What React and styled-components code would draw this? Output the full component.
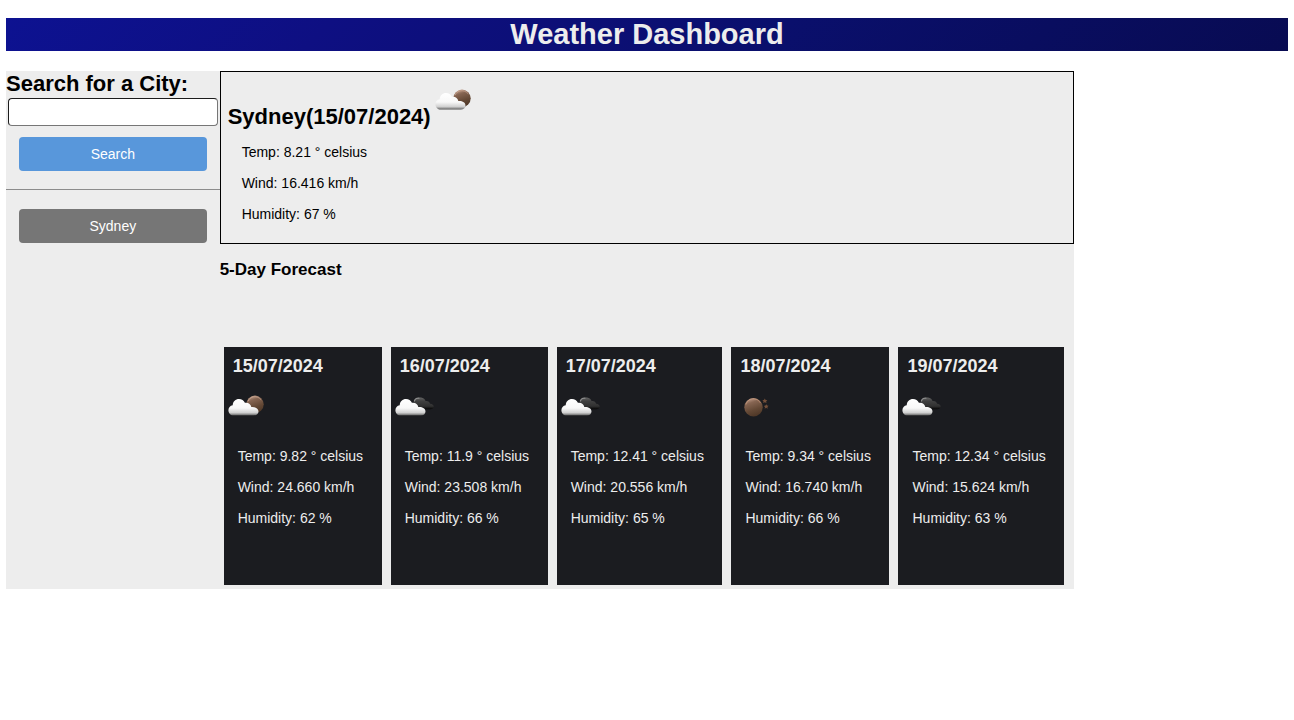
import React, { useId, useState } from "react";
import styled, { createGlobalStyle } from "styled-components";

const GlobalStyle = createGlobalStyle`
  * { box-sizing: border-box; }
  body {
    margin: 18px 6px 0;
    background: #fff;
    color: #000;
    font-family: "Liberation Sans", Arial, sans-serif;
    font-size: 14px;
    line-height: 16px;
  }
`;

const Header = styled.header`
  background: linear-gradient(135deg, #0d1291 0%, #0e0f82 25%, #0a0f6c 60%, #080b52 100%);
  color: #ededed;
  text-align: center;
`;

const PageTitle = styled.h1`
  margin: 0;
  font-size: 29px;
  line-height: 33px;
`;

const Layout = styled.div`
  display: grid;
  grid-template-columns: 1fr 4fr 1fr;
  margin-top: 20px;
`;

const Sidebar = styled.aside`
  min-width: 0;
  background: #ededed;
`;

const SearchForm = styled.form`
  display: flex;
  flex-direction: column;
`;

const SearchLabel = styled.label`
  font-size: 22px;
  font-weight: bold;
  line-height: 25px;
  white-space: nowrap;
`;

const SearchInput = styled.input`
  height: 28px;
  margin: 2px 2px 2px 2px;
  padding: 4px;
  border: 1px solid #767676;
  border-top-color: #1c1c1c;
  border-left-color: #1c1c1c;
  border-radius: 4px;
  background: #fff;
  font: inherit;
`;

const Button = styled.button`
  display: block;
  width: calc(100% - 26px);
  height: 34px;
  margin: 9px 13px 18px;
  padding: 0;
  border: 0;
  border-radius: 4px;
  background: ${({ $history }) => ($history ? "#767676" : "#5897db")};
  color: #fff;
  font: inherit;
  cursor: pointer;
`;

const Divider = styled.hr`
  height: 1px;
  margin: 0 0 19px;
  border: 0;
  background: #8c8c8c;
`;

const Content = styled.main`
  min-width: 0;
  background: #ededed;
`;

const Today = styled.section`
  padding: 14px 7px 13px;
  border: 1px solid #000;
`;

const TodayHeading = styled.div`
  display: flex;
  height: 51px;
`;

const CityName = styled.h2`
  margin: 0;
  padding-top: 18px;
  font-size: 22px;
  line-height: 25px;
`;

const Reading = styled.p`
  margin: 0;
  padding: 7px 14px 8px;
  white-space: nowrap;
`;

const Forecast = styled.section``;

const ForecastTitle = styled.h3`
  margin: 0;
  padding: 16px 0 68px;
  font-size: 17px;
  line-height: 19px;
`;

const Days = styled.div`
  display: flex;
  gap: 9px;
  padding: 0 10px 4px 4px;
`;

const Day = styled.article`
  flex: 1 1 auto;
  min-height: 238px;
  padding-top: 9px;
  background: #1b1c20;
  color: #ededed;
`;

const DayTitle = styled.h4`
  margin: 0 9px 16px;
  font-size: 18px;
  line-height: 20px;
`;

const DayIcon = styled.div`
  height: 49px;
`;

const IconSvg = styled.svg`
  display: block;
  flex: none;
  width: 45px;
  height: 34px;
`;

function WeatherIcon({ kind }) {
  const id = useId();
  const white = `${id}-white`;
  const sun = `${id}-sun`;
  const dark = `${id}-dark`;
  const moonOnly = kind === "clear";
  return (
    <IconSvg viewBox="0 0 45 34" role="img" aria-label={kind}>
      <defs>
        <linearGradient id={white} x1="0" y1="0" x2="0" y2="1">
          <stop offset="0" stopColor="#fff" />
          <stop offset=".55" stopColor="#f8f8f8" />
          <stop offset=".83" stopColor="#d0d0d0" />
          <stop offset=".94" stopColor="#888" />
          <stop offset="1" stopColor="#4b4b4b" />
        </linearGradient>
        <linearGradient id={sun} x1=".3" y1="0" x2=".65" y2="1">
          <stop offset="0" stopColor="#c3a08c" />
          <stop offset=".25" stopColor="#866552" />
          <stop offset=".65" stopColor="#634835" />
          <stop offset="1" stopColor="#4d3626" />
        </linearGradient>
        <linearGradient id={dark} x1="0" y1="0" x2="0" y2="1">
          <stop offset="0" stopColor="#666" />
          <stop offset=".3" stopColor="#414141" />
          <stop offset=".75" stopColor="#303030" />
          <stop offset="1" stopColor="#050505" />
        </linearGradient>
      </defs>
      {moonOnly && (
        <g>
          <circle cx="22.5" cy="15.2" r="9.2" fill={`url(#${sun})`} />
          <path d="M15 12.5c1-4 4.5-6 8-5.6 3 .1 5.2 1.8 6.4 4" fill="none" stroke="#c7987c" strokeWidth="1" opacity=".7" />
          <path d="m33.8 6.5.8 1.5 1.8.2-1.3 1.2.4 1.7-1.7-.9-1.6.9.3-1.8-1.2-1.2 1.7-.2zM35.3 12.2l.7 1.4 1.6.2-1.2 1.2.3 1.7-1.5-.9-1.5.9.3-1.7-1.2-1.1 1.7-.3z" fill="#74503a" />
        </g>
      )}
      {kind === "partly cloudy" && (
        <g>
          <circle cx="31" cy="12.3" r="8.7" fill={`url(#${sun})`} />
          <path d="M24 9.3c2-5 9-6.5 13.2-1.5" fill="none" stroke="#d0aa96" strokeWidth="1" opacity=".65" />
        </g>
      )}
      {kind === "cloudy" && (
        <path d="M23 12c0-4 3-7 7-6.5 2.5.2 4 1.8 4.5 3.6 2.4-.4 4.2.8 4.6 2.7 2.3.2 3.6 1.2 3.6 2.8s-1.5 2.6-3.5 2.6H25z" fill={`url(#${dark})`} />
      )}
      {kind === "cloudy" && (
        <path d="M23.2 9.5c.8-2.7 3-4 5.3-3.2" fill="none" stroke="#909090" strokeWidth="1.2" />
      )}
      {!moonOnly && (
        <path
          d="M9.7 23.5C6.7 23.5 4.4 21.2 4.4 18.2c0-2.6 1.7-4.7 4.3-5 .3-3.8 2.8-6.1 6.3-6.1 2.7 0 4.9 1.4 5.9 3.7 3.2-.6 5.9 1.2 6.4 4.3 4-.3 7.2 1.4 7.2 4.3 0 2.3-2 4.1-4.7 4.1z"
          fill={`url(#${white})`}
        />
      )}
    </IconSvg>
  );
}

function Readings({ temp, wind, humidity }) {
  return (
    <>
      <Reading>Temp: {temp} ° celsius</Reading>
      <Reading>Wind: {wind} km/h</Reading>
      <Reading>Humidity: {humidity} %</Reading>
    </>
  );
}

const days = [
  { date: "15/07/2024", kind: "partly cloudy", temp: "9.82", wind: "24.660", humidity: 62 },
  { date: "16/07/2024", kind: "cloudy", temp: "11.9", wind: "23.508", humidity: 66 },
  { date: "17/07/2024", kind: "cloudy", temp: "12.41", wind: "20.556", humidity: 65 },
  { date: "18/07/2024", kind: "clear", temp: "9.34", wind: "16.740", humidity: 66 },
  { date: "19/07/2024", kind: "cloudy", temp: "12.34", wind: "15.624", humidity: 63 },
];

export default function App() {
  const [city, setCity] = useState("");
  return (
    <>
      <GlobalStyle />
      <Header>
        <PageTitle>Weather Dashboard</PageTitle>
      </Header>
      <Layout>
        <Sidebar>
          <SearchForm onSubmit={(event) => event.preventDefault()}>
            <SearchLabel htmlFor="city">Search for a City:</SearchLabel>
            <SearchInput id="city" value={city} onChange={(event) => setCity(event.target.value)} />
            <Button type="submit">Search</Button>
          </SearchForm>
          <Divider />
          <Button type="button" $history>Sydney</Button>
        </Sidebar>
        <Content>
          <Today>
            <TodayHeading>
              <CityName>Sydney(15/07/2024)</CityName>
              <WeatherIcon kind="partly cloudy" />
            </TodayHeading>
            <Readings temp="8.21" wind="16.416" humidity={67} />
          </Today>
          <Forecast>
            <ForecastTitle>5-Day Forecast</ForecastTitle>
            <Days>
              {days.map((day) => (
                <Day key={day.date}>
                  <DayTitle>{day.date}</DayTitle>
                  <DayIcon>
                    <WeatherIcon kind={day.kind} />
                  </DayIcon>
                  <Readings temp={day.temp} wind={day.wind} humidity={day.humidity} />
                </Day>
              ))}
            </Days>
          </Forecast>
        </Content>
      </Layout>
    </>
  );
}
